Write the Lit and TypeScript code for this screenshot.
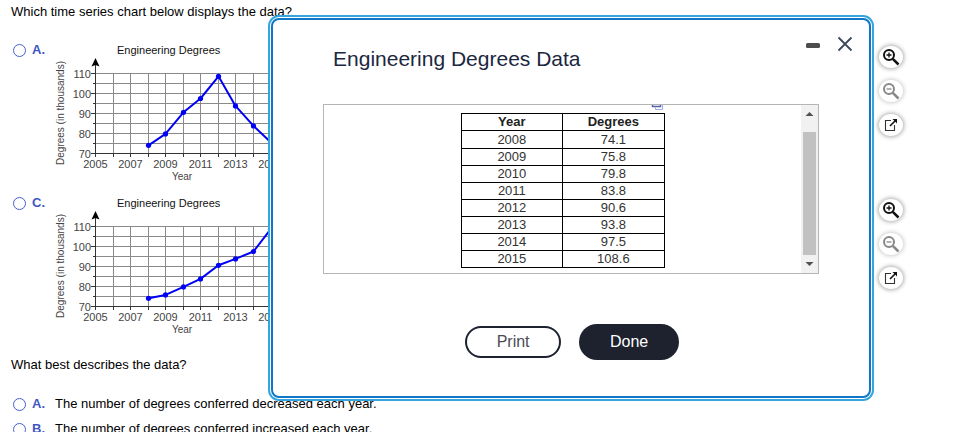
import { LitElement, html, css, svg } from "lit";
import { customElement, property, state } from "lit/decorators.js";

const FONT = css`"Liberation Sans", Arial, sans-serif`;

/** Line chart of degrees per year; points are degrees in thousands from 2008 on. */
@customElement("degree-chart")
class DegreeChart extends LitElement {
  @property({ attribute: false }) values: number[] = [];

  static styles = css`
    :host { display: block; }
    svg { display: block; width: 240px; height: 147px; font-family: ${FONT}; overflow: visible; }
    .title { font-size: 11px; fill: #111; }
    .tick { font-size: 11px; fill: #444; }
    .name { font-size: 10px; fill: #444; }
    .grid { stroke: #8a8a8a; fill: none; }
    .axis { stroke: #333; fill: none; }
    .line { stroke: #0000f5; stroke-width: 2; fill: none; stroke-linejoin: round; }
    .dot { fill: #0000f5; }
  `;

  private x(year: number) {
    return 40.5 + Math.round((year - 2005) * 17.5);
  }
  private y(v: number) {
    return 113.5 - (v - 70) * 2;
  }

  render() {
    const years = Array.from({ length: 12 }, (_, i) => 2005 + i);
    const levels = [70, 75, 80, 85, 90, 95, 100, 105, 110];
    const right = this.x(2016);
    const pts = this.values.map((v, i) => [this.x(2008 + i), this.y(v)]);
    return html`<svg role="img" aria-label="Engineering Degrees line chart">
      <text class="title" x="62" y="14">Engineering Degrees</text>
      <text class="name" text-anchor="middle" transform="translate(9 73) rotate(-90)">Degrees (in thousands)</text>
      ${years.slice(1).map((t) => svg`<path class="grid" d="M${this.x(t)} 33V113"/><path class="axis" d="M${this.x(t)} 113v4"/>`)}
      ${levels.map((l) => svg`
        <path class="grid" d="M40 ${this.y(l)}H${right}"/>
        <path class="axis" d="M${l % 10 ? 38 : 36} ${this.y(l)}H40"/>
        ${l % 10 ? null : svg`<text class="tick" text-anchor="end" x="36" y="${this.y(l) + 4}">${l}</text>`}`)}
      <path class="axis" d="M40.5 24V117M40 113.5H${right}"/>
      <path d="M40.500 18L44.500 26.500L40.500 25L36.500 26.500Z"/>
      ${years.filter((t) => t % 2).map((t) => svg`<text class="tick" text-anchor="middle" x="${this.x(t)}" y="128">${t}</text>`)}
      <text class="name" text-anchor="middle" x="127" y="140">Year</text>
      <polyline class="line" points="${pts.map((p) => p.join(",")).join(" ")}"></polyline>
      ${pts.map((p) => svg`<circle class="dot" cx="${p[0]}" cy="${p[1]}" r="2.600"/>`)}
    </svg>`;
  }
}

/** Round zoom-in, zoom-out and open-in-window buttons beside a chart. */
@customElement("chart-tools")
class ChartTools extends LitElement {
  static styles = css`
    :host { display: flex; flex-direction: column; gap: 12px; }
    button {
      width: 24px; height: 22px; padding: 0; border: 0; border-radius: 50%;
      background: #fff; box-shadow: 0 0 4px 1px #aaa;
      display: flex; align-items: center; justify-content: center; color: #111;
    }
    button:disabled { color: #888; box-shadow: 0 0 4px 1px #ccc; }
    svg { width: 18px; height: 18px; fill: none; stroke: currentColor; }
  `;

  render() {
    const lens = svg`<circle cx="7" cy="7" r="5" stroke-width="2"/><path stroke-width="2.500" d="M10.800 10.800L16.500 16.500"/>`;
    return html`
      <button aria-label="Zoom in"><svg>${lens}<path stroke-width="1.300" d="M4.500 7h5M7 4.500v5"/></svg></button>
      <button aria-label="Zoom out" disabled><svg>${lens}<path stroke-width="1.300" d="M4.500 7h5"/></svg></button>
      <button aria-label="Open in new window"><svg>
        <path stroke="#333" stroke-width="1.100" d="M9 4.500H3.500V14.500H12.500V9"/>
        <path stroke-width="1.600" d="M8 10L13 5"/>
        <path stroke="none" fill="currentColor" d="M10.500 3H15V7.500Z"/>
      </svg></button>`;
  }
}

@customElement("data-dialog")
class DataDialog extends LitElement {
  private rows: [number, string][] = [
    [2008, "74.1"], [2009, "75.8"], [2010, "79.8"], [2011, "83.8"],
    [2012, "90.6"], [2013, "93.8"], [2014, "97.5"], [2015, "108.6"],
  ];

  static styles = css`
    :host { display: block; }
    .dialog {
      box-sizing: border-box; border: 2px solid #0f76c8; border-radius: 8px;
      background: #fff; box-shadow: 0 0 0 1px #fff, 0 0 0 3px #36a5dd;
      padding: 14px 16px 36px 50px; font-family: ${FONT};
    }
    header { display: flex; align-items: flex-start; padding-left: 10px; }
    h2 { flex: 1; margin: 0; padding-top: 12px; font-size: 21px; line-height: 26px; font-weight: 400; color: #1c2740; }
    .controls { display: flex; gap: 16px; }
    .controls button { width: 16px; height: 20px; padding: 0; border: 0; background: none; display: flex; align-items: center; justify-content: center; }
    .controls svg { width: 16px; height: 16px; }
    .pane { display: flex; margin: 32px 34px 0 0; border: 1px solid #b5b5b5; }
    .content { flex: 1; padding: 8px 0 5px; display: flex; justify-content: center; position: relative; }
    .copy { position: absolute; top: 0; left: 50%; margin-left: 88px; width: 13px; height: 6px; }
    table { border-collapse: collapse; width: 204px; font-size: 13px; line-height: 16px; color: #333; }
    th, td { box-sizing: border-box; width: 50%; border: 1px solid #000; padding: 0; text-align: center; height: 17px; }
    th { color: #222; }
    tbody tr:first-child td { height: 18px; }
    .bar { width: 17px; background: #f1f1f1; display: flex; flex-direction: column; align-items: center; }
    .bar svg { width: 17px; height: 18px; fill: #505050; }
    .thumb { width: 13px; flex: 1; margin-top: 9px; background: #c1c1c1; }
    footer { display: flex; justify-content: center; align-items: center; gap: 18px; margin: 50px 32px 0 0; }
    footer button { font: 16px ${FONT}; border-radius: 18px; padding: 0; }
    .print { width: 96px; height: 32px; border: 2px solid #1d2230; background: #fff; color: #4a4d57; }
    .done { width: 100px; height: 36px; border: 0; background: #1d222e; color: #fff; }
  `;

  private close() {
    this.dispatchEvent(new CustomEvent("close"));
  }

  render() {
    return html`<section class="dialog" role="dialog" aria-labelledby="title">
      <header>
        <h2 id="title">Engineering Degrees Data</h2>
        <div class="controls">
          <button aria-label="Minimize"><svg><rect x="1" y="7" width="14" height="5" rx="1.500" fill="#4d4d4d"/></svg></button>
          <button aria-label="Close" @click=${this.close}><svg><path d="M1.500 1.500l13 13M14.500 1.500l-13 13" stroke="#3c485a" stroke-width="1.800"/></svg></button>
        </div>
      </header>
      <div class="pane">
        <div class="content">
          <svg class="copy" aria-hidden="true"><path d="M1.500 0V1.500H9.500V0" fill="none" stroke="#5562ab" stroke-width="1.500"/><path d="M4.500 2.500V4.500H11.500V0" fill="none" stroke="#a4acdd"/></svg>
          <table>
            <thead><tr><th scope="col">Year</th><th scope="col">Degrees</th></tr></thead>
            <tbody>${this.rows.map(([y, d]) => html`<tr><td>${y}</td><td>${d}</td></tr>`)}</tbody>
          </table>
        </div>
        <div class="bar" aria-hidden="true">
          <svg><path d="M8.500 7L12.500 11H4.500Z"/></svg>
          <div class="thumb"></div>
          <svg><path d="M8.500 11L12.500 7H4.500Z"/></svg>
        </div>
      </div>
      <footer>
        <button class="print">Print</button>
        <button class="done" @click=${this.close}>Done</button>
      </footer>
    </section>`;
  }
}

@customElement("app-root")
class AppRoot extends LitElement {
  @state() private open = true;

  static styles = css`
    :host {
      display: block; position: relative; height: 100vh; overflow: hidden;
      background: #fff; color: #000; font: 13px/16px ${FONT};
    }
    main { padding: 4px 0 0 11px; }
    p { margin: 0; }
    .charts { padding: 20px 0 11px; }
    .option { display: flex; align-items: flex-start; height: 153px; padding-right: 65px; }
    .choice { display: flex; align-items: center; width: 44px; flex: none; padding-top: 2px; color: #3f57c4; font-weight: 700; }
    input {
      appearance: none; box-sizing: border-box; flex: none; width: 13px; height: 13px;
      margin: 0 6px 0 2px; border: 1px solid #4560cf; border-radius: 50%; background: #fff;
    }
    input:checked { background: #4560cf; box-shadow: inset 0 0 0 2px #fff; }
    degree-chart { flex: 1; }
    chart-tools { padding-top: 6px; }
    .answers { padding-top: 23px; display: flex; flex-direction: column; gap: 9px; }
    .answer { display: flex; }
    .answer .choice { padding-top: 0; }
    .overlay { position: absolute; top: 18px; left: 28%; right: 10%; }
  `;

  private chart(letter: string, values: number[]) {
    return html`<div class="option">
      <label class="choice"><input type="radio" name="chart" value=${letter} />${letter}.</label>
      <degree-chart .values=${values}></degree-chart>
      <chart-tools></chart-tools>
    </div>`;
  }

  private answer(letter: string, text: string) {
    return html`<label class="answer">
      <span class="choice"><input type="radio" name="answer" value=${letter} />${letter}.</span>
      <span>${text}</span>
    </label>`;
  }

  render() {
    return html`
      <main>
        <p>Which time series chart below displays the data?</p>
        <div class="charts">
          ${this.chart("A", [74.1, 79.8, 90.6, 97.5, 108.6, 93.8, 83.8, 75.8])}
          ${this.chart("C", [74.1, 75.8, 79.8, 83.8, 90.6, 93.8, 97.5, 108.6])}
        </div>
        <p>What best describes the data?</p>
        <div class="answers">
          ${this.answer("A", "The number of degrees conferred decreased each year.")}
          ${this.answer("B", "The number of degrees conferred increased each year.")}
        </div>
      </main>
      ${this.open ? html`<data-dialog class="overlay" @close=${() => (this.open = false)}></data-dialog>` : null}
    `;
  }
}
